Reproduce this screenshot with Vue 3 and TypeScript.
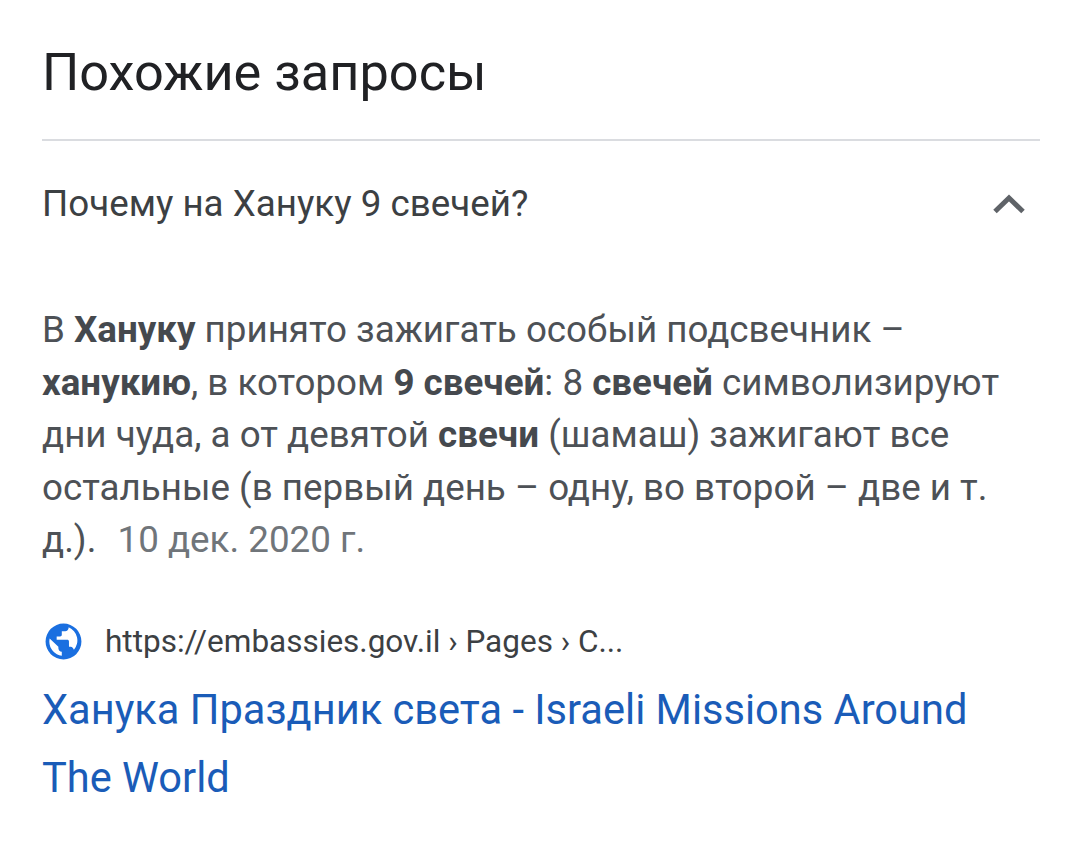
<script setup lang="ts">
const url = 'https://embassies.gov.il › Pages › C...'
</script>

<template>
  <div class="page">
    <h2 class="heading">Похожие запросы</h2>
    <div class="question">
      <span>Почему на Хануку 9 свечей?</span>
      <svg class="chev" width="34" height="22" viewBox="0 0 34 22"><path d="M3 18.500 17 5l14 13.500" fill="none" stroke="#5f6368" stroke-width="5"/></svg>
    </div>
    <p class="answer">
      В <b>Хануку</b> принято зажигать особый подсвечник –<br>
      <b>ханукию</b>, в котором <b>9 свечей</b>: 8 <b>свечей</b> символизируют<br>
      дни чуда, а от девятой <b>свечи</b> (шамаш) зажигают все<br>
      остальные (в первый день – одну, во второй – две и т.<br>
      д.). <span class="date">10 дек. 2020 г.</span>
    </p>
    <div class="source">
      <svg class="globe" width="41" height="41" viewBox="0 0 24 24"><path fill="#1a6fe0" d="M12 1.500a10.500 10.500 0 1 0 0 21 10.500 10.500 0 0 0 0-21zM3.700 12c0-.6.1-1.200.2-1.800L9 15v1c0 1.100.9 2 2 2v2.300A8.300 8.300 0 0 1 3.700 12zm14.400 4.800c-.3-.8-1-1.800-1.900-1.800h-1v-3c0-.6-.4-1-1-1H8v-2h2c.6 0 1-.4 1-1V6h2c1.100 0 2-.9 2-2v-.3a8.300 8.300 0 0 1 3.100 13.100z"/></svg>
      <span class="url">{{ url }}</span>
    </div>
    <a class="title">Ханука Праздник света - Israeli Missions Around The World</a>
  </div>
</template>

<style>
html, body { background: #fff; }
</style>

<style scoped>
.page {
  width: 1080px;
  height: 841px;
  box-sizing: border-box;
  padding: 0 40px 0 42px;
  overflow: hidden;
  font-family: Roboto, "Liberation Sans", sans-serif;
  background: #fff;
}
.heading {
  margin: 0;
  padding: 42px 0 36px;
  font-size: 52.300px;
  line-height: 61px;
  font-weight: 400;
  color: #202124;
  border-bottom: 2px solid #dadce0;
}
.question {
  display: flex;
  justify-content: space-between;
  align-items: center;
  height: 125px;
  font-size: 36.750px;
  color: #3c4043;
}
.chev { margin-right: 14px; }
.answer {
  margin: 38px 0 0;
  font-size: 36.750px;
  line-height: 52.500px;
  color: #4d5156;
}
.answer b { color: #45494e; font-weight: 700; }
.date { color: #70757a; margin-left: 12px; }
.source {
  display: flex;
  align-items: center;
  gap: 21px;
  margin-top: 54px;
  font-size: 31.500px;
  color: #3c4043;
}
.globe { margin-left: 1px; }
.title {
  display: block;
  margin-top: 14px;
  font-size: 41.600px;
  line-height: 68px;
  color: #1a5cb8;
}
</style>
